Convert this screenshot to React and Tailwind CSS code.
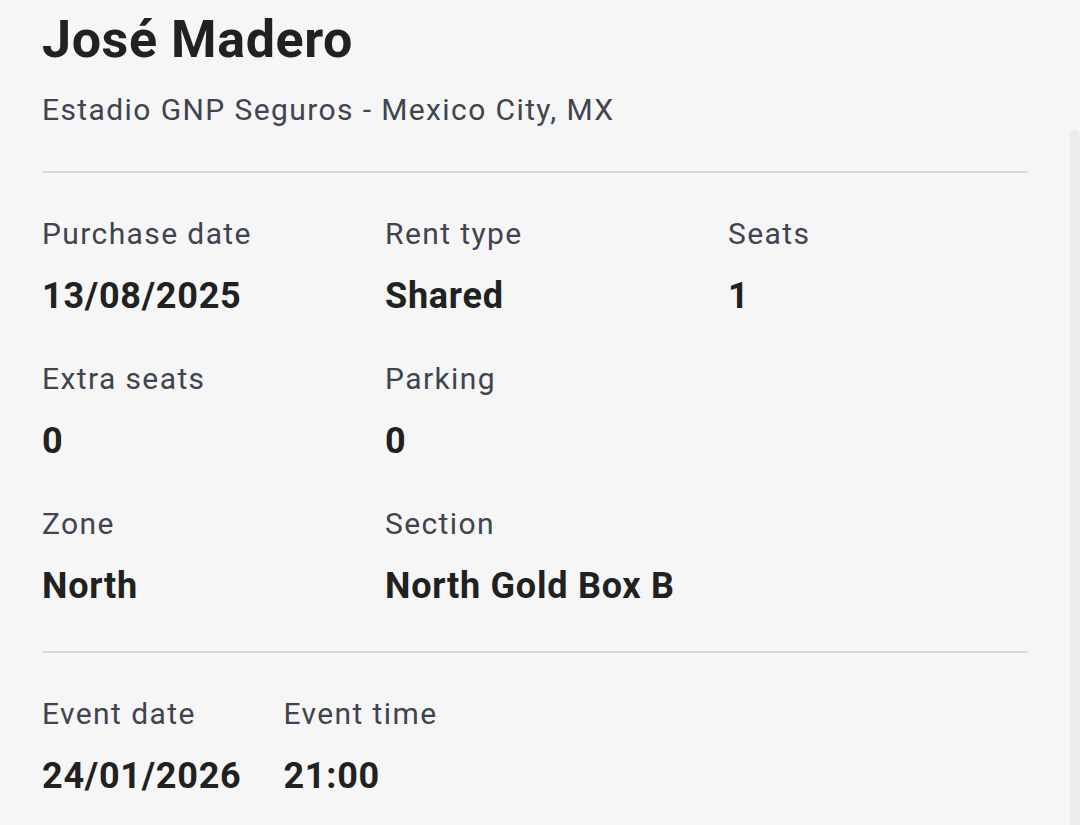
import React from 'react';

const details = [
  { label: 'Purchase date', value: '13/08/2025' },
  { label: 'Rent type', value: 'Shared' },
  { label: 'Seats', value: '1' },
  { label: 'Extra seats', value: '0' },
  { label: 'Parking', value: '0' },
  { label: 'Zone', value: 'North' },
  { label: 'Section', value: 'North Gold Box B' },
];

const Field = ({ label, value }) => (
  <div className="flex flex-col gap-[20px]">
    <span className="text-[30px] leading-[40px] tracking-[1.4px] text-[#40444f]">{label}</span>
    <span className="text-[36px] leading-[44px] tracking-[0.75px] font-bold text-[#212121]">{value}</span>
  </div>
);

const App = () => {
  return (
    <div
      className="flex h-[825px] w-[1080px] overflow-hidden bg-[#f6f6f6]"
      style={{ fontFamily: 'Roboto, "Noto Sans", sans-serif' }}
    >
      <main className="w-[1070px] px-[42px] pt-[10px]">
        <header className="flex flex-col gap-[22px] pb-[43px]">
          <h1 className="text-[52px] leading-[60px] tracking-[0.6px] font-bold text-[#212121]">José Madero</h1>
          <p className="text-[30px] leading-[36px] tracking-[1.4px] text-[#40444f]">Estadio GNP Seguros - Mexico City, MX</p>
        </header>

        <div className="h-[2px] bg-[#dadada]" />

        <section className="grid grid-cols-3 gap-x-[43px] gap-y-[41px] pt-[41px] pb-[43px]">
          {details.map((d) => (
            <React.Fragment key={d.label}>
              <Field label={d.label} value={d.value} />
              {d.label === 'Parking' && <div />}
            </React.Fragment>
          ))}
        </section>

        <div className="h-[2px] bg-[#dadada]" />

        <section className="flex gap-x-[42px] pt-[41px]">
          <Field label="Event date" value="24/01/2026" />
          <Field label="Event time" value="21:00" />
        </section>
      </main>

      {/* scrollbar */}
      <div className="w-[10px]">
        <div className="mt-[130px] h-[695px] rounded-tl-[6px] rounded-tr-[6px] bg-[#ececec]" />
      </div>
    </div>
  );
};

export default App;
